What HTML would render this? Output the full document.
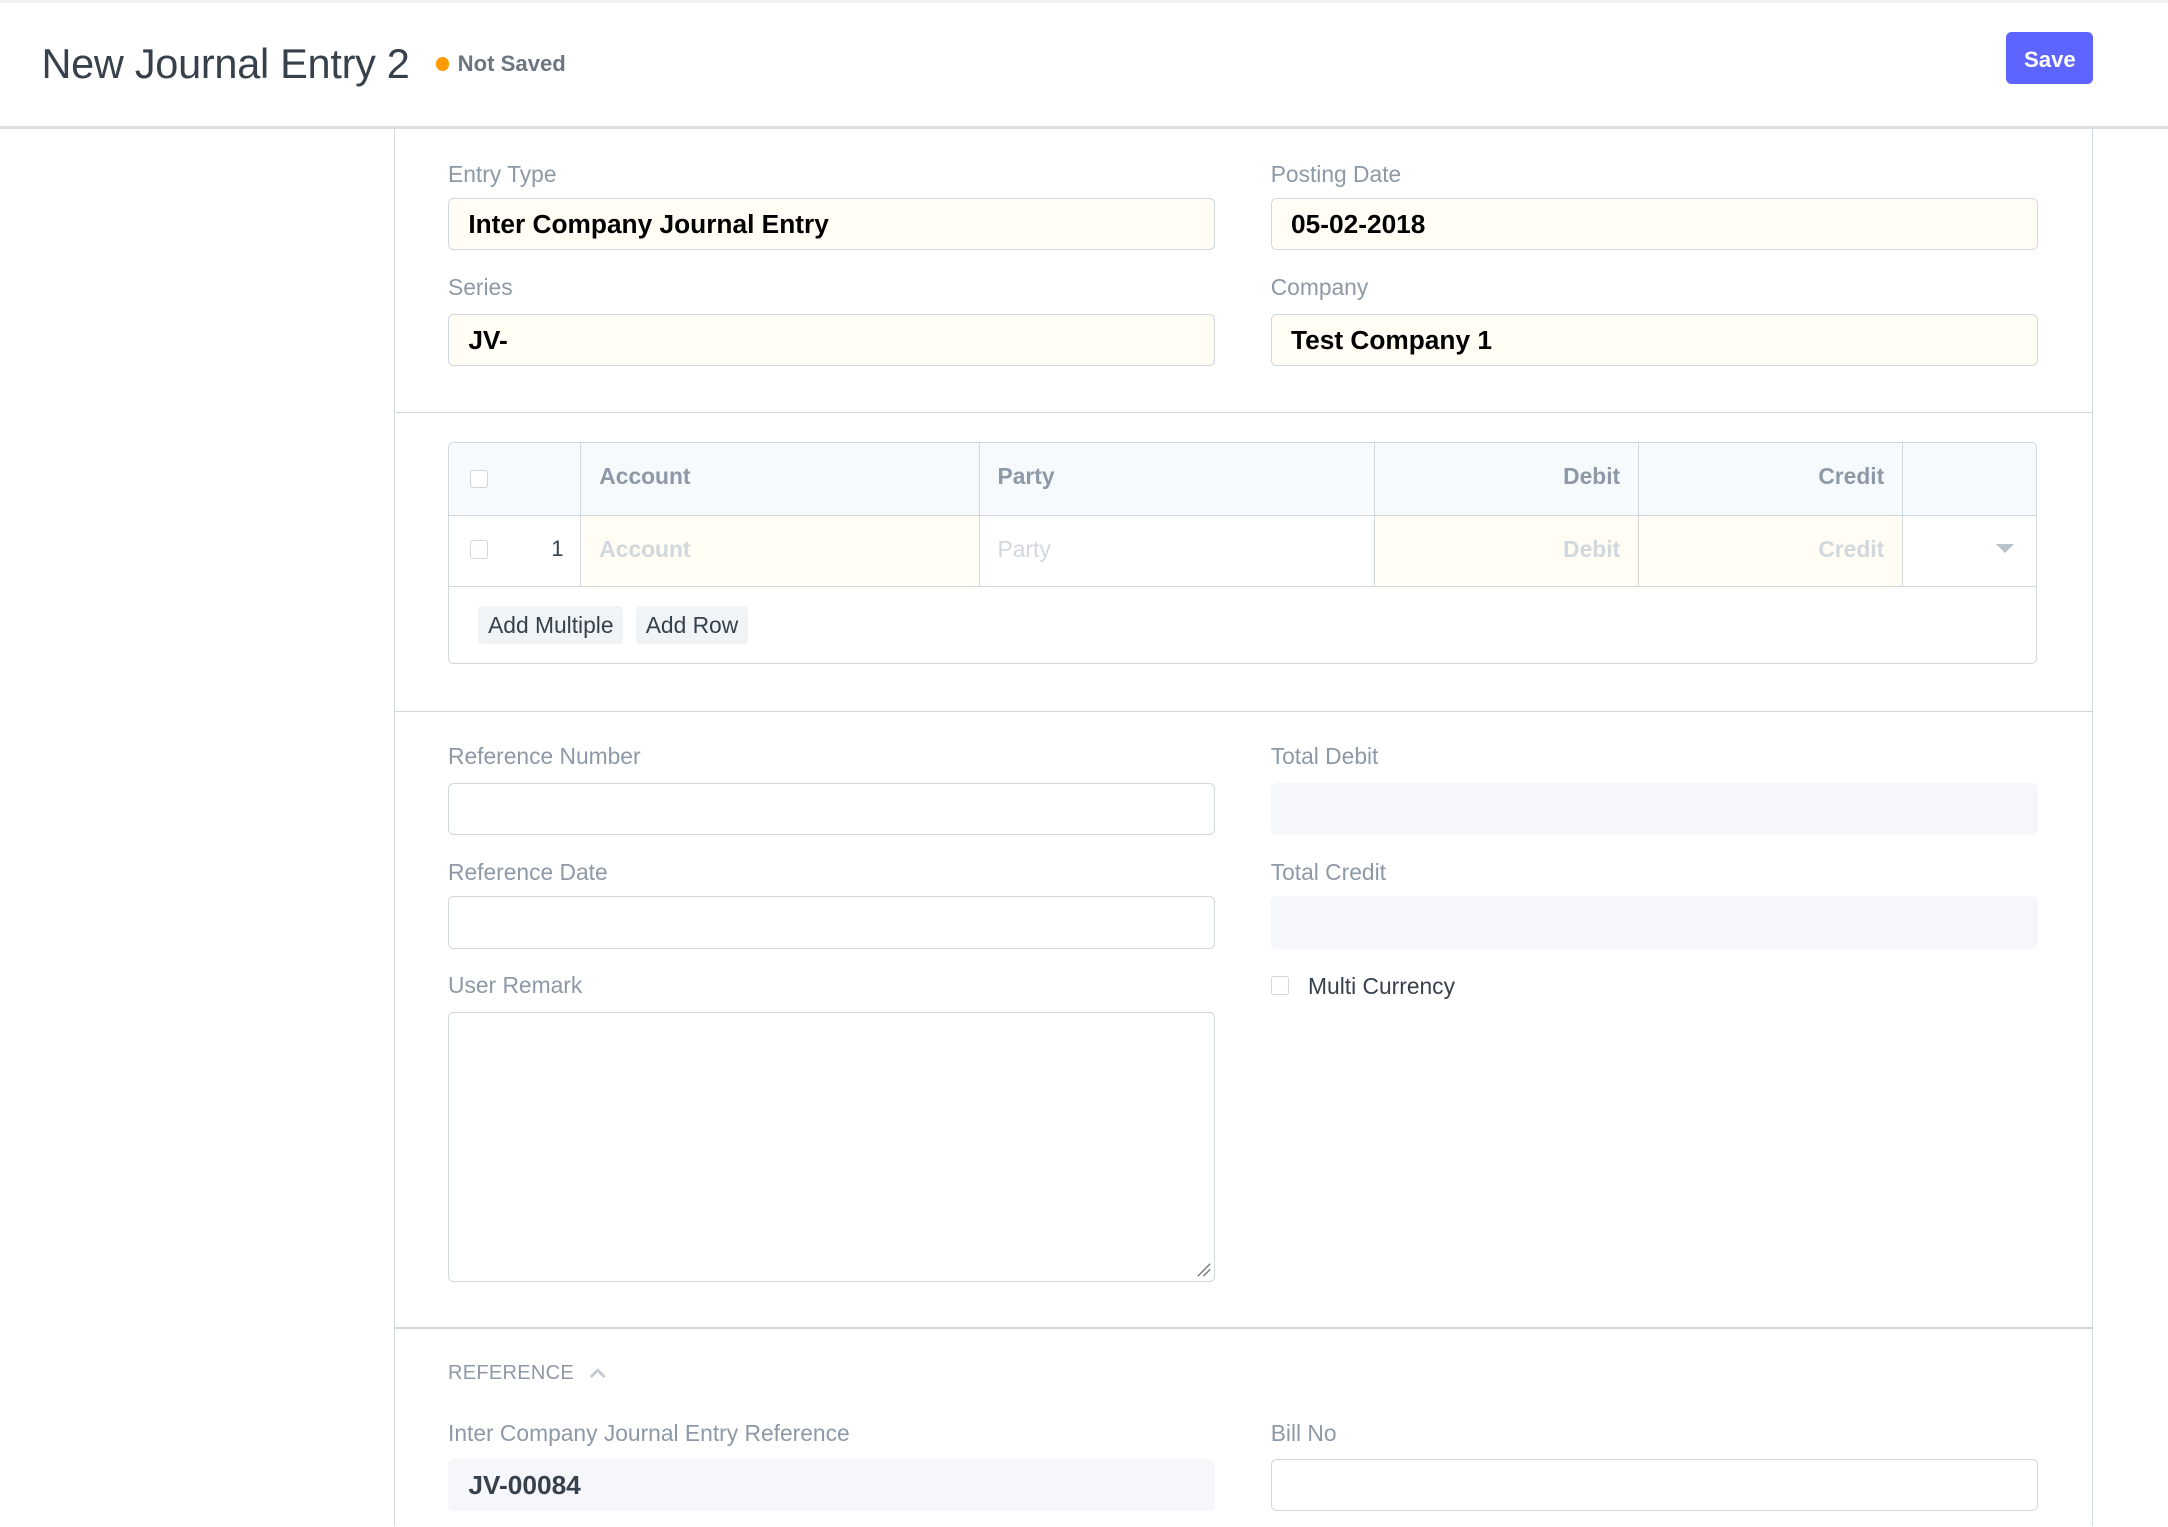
<!DOCTYPE html>
<html><head><meta charset="utf-8">
<style>
html,body{margin:0;padding:0;background:#fff;}
body{width:2168px;height:1526px;overflow:hidden;}
#w{zoom:1.3827;position:relative;width:1568px;height:1104px;font-family:"Liberation Sans",sans-serif;color:#36414c;}
.a{position:absolute;}
.lbl{position:absolute;font-size:16.5px;color:#8d99a6;line-height:18px;}
.inp{position:absolute;box-sizing:border-box;height:38px;width:555px;border:1px solid #d1d8dd;border-radius:4px;background:#fffdf4;font-weight:bold;font-size:19px;color:#000;padding-left:14px;line-height:37px;}
.w{background:#fff;}
.g{background:#f5f7fa;border-color:#f5f7fa;color:#36414c;}
.th{position:absolute;top:0;height:52px;line-height:48px;font-weight:bold;font-size:16.5px;color:#8d99a6;box-sizing:border-box;border-left:1px solid #d1d8dd;padding:0 13px;}
.td{position:absolute;top:52px;height:52px;line-height:48px;font-weight:bold;font-size:16.5px;color:#d1d8dd;box-sizing:border-box;border-left:1px solid #d1d8dd;border-top:1px solid #d1d8dd;padding:0 13px;}
.cb{position:absolute;width:12px;height:12px;border:1px solid #d1d8dd;border-radius:2px;background:#fff;}
.btn{position:absolute;top:438px;height:28px;line-height:28px;background:#f0f4f7;border-radius:3px;font-size:16.5px;color:#36414c;padding:0 7px;}
</style></head><body><div id="w">
<div class="a" style="left:0;top:0;width:1568px;height:2px;background:#eef0f2"></div>
<div class="a" style="left:0;top:91px;width:1568px;height:2px;background:#d8dee3"></div>
<div class="a" style="left:30px;top:29px;font-size:30px;letter-spacing:-0.2px;color:#36414c">New Journal Entry 2</div>
<div class="a" style="left:315px;top:41px;width:10px;height:10px;border-radius:5px;background:#ff9a00"></div>
<div class="a" style="left:331px;top:37px;font-size:16px;font-weight:bold;color:#6c7680">Not Saved</div>
<div class="a" style="left:1451px;top:23px;width:63px;height:38px;border-radius:4px;background:#5e64ff;color:#fff;font-weight:bold;font-size:16px;line-height:40px;text-align:center">Save</div>
<div class="a" style="left:285px;top:93px;width:1px;height:1011px;background:#d1d8dd"></div>
<div class="a" style="left:1513px;top:93px;width:1px;height:1011px;background:#d1d8dd"></div>
<div class="a" style="left:286px;top:298px;width:1227px;height:1px;background:#d1d8dd"></div>
<div class="a" style="left:286px;top:514px;width:1227px;height:1px;background:#d1d8dd"></div>
<div class="a" style="left:286px;top:960px;width:1227px;height:1px;background:#d1d8dd"></div>

<div class="lbl" style="left:324px;top:117px">Entry Type</div>
<div class="lbl" style="left:919px;top:117px">Posting Date</div>
<div class="inp" style="left:324px;top:143px">Inter Company Journal Entry</div>
<div class="inp" style="left:919px;top:143px">05-02-2018</div>
<div class="lbl" style="left:324px;top:199px">Series</div>
<div class="lbl" style="left:919px;top:199px">Company</div>
<div class="inp" style="left:324px;top:227px">JV-</div>
<div class="inp" style="left:919px;top:227px">Test Company 1</div>

<div class="a" style="left:324px;top:320px;width:1149px;height:160px;box-sizing:border-box;border:1px solid #d1d8dd;border-radius:4px;overflow:hidden">
 <div class="a" style="left:0;top:0;width:1149px;height:52px;background:#f7fafc"></div>
 <div class="cb" style="left:15px;top:19px"></div>
 <div class="th" style="left:95px;width:288px">Account</div>
 <div class="th" style="left:383px;width:287px">Party</div>
 <div class="th" style="left:669px;width:191px;text-align:right">Debit</div>
 <div class="th" style="left:860px;width:191px;text-align:right">Credit</div>
 <div class="th" style="left:1051px;width:98px"></div>
 <div class="a" style="left:0;top:52px;width:95px;height:52px;border-top:1px solid #d1d8dd;box-sizing:border-box"></div>
 <div class="cb" style="left:15px;top:70px"></div>
 <div class="a" style="left:74px;top:67px;font-size:16px;color:#36414c">1</div>
 <div class="td" style="left:95px;width:288px;background:#fffdf4">Account</div>
 <div class="td" style="left:383px;width:287px;font-weight:normal">Party</div>
 <div class="td" style="left:669px;width:191px;text-align:right;background:#fffdf4">Debit</div>
 <div class="td" style="left:860px;width:191px;text-align:right;background:#fffdf4">Credit</div>
 <div class="td" style="left:1051px;width:98px"></div>
 <div class="a" style="left:1119px;top:73px;width:0;height:0;border-left:7px solid transparent;border-right:7px solid transparent;border-top:7px solid #b8c2cc"></div>
 <div class="a" style="left:0;top:103px;width:1149px;height:1px;background:#d1d8dd"></div>
</div>
<div class="btn" style="left:346px">Add Multiple</div>
<div class="btn" style="left:460px">Add Row</div>

<div class="lbl" style="left:324px;top:538px">Reference Number</div>
<div class="lbl" style="left:919px;top:538px">Total Debit</div>
<div class="inp w" style="left:324px;top:566px"></div>
<div class="inp g" style="left:919px;top:566px"></div>
<div class="lbl" style="left:324px;top:622px">Reference Date</div>
<div class="lbl" style="left:919px;top:622px">Total Credit</div>
<div class="inp w" style="left:324px;top:648px"></div>
<div class="inp g" style="left:919px;top:648px"></div>
<div class="lbl" style="left:324px;top:704px">User Remark</div>
<div class="inp w" style="left:324px;top:732px;height:195px"></div>
<svg class="a" style="left:864px;top:912px" width="12" height="12"><path d="M2 11L11 2M6 11L11 6" stroke="#777" stroke-width="1"/></svg>
<div class="cb" style="left:919px;top:706px"></div>
<div class="a" style="left:946px;top:704px;font-size:16.5px;color:#36414c">Multi Currency</div>

<div class="a" style="left:324px;top:985px;font-size:14.5px;color:#8d99a6;letter-spacing:0.2px">REFERENCE</div>
<svg class="a" style="left:425px;top:988px" width="14" height="10"><path d="M2 8L7 3L12 8" stroke="#c0c8d0" stroke-width="2" fill="none"/></svg>
<div class="lbl" style="left:324px;top:1028px">Inter Company Journal Entry Reference</div>
<div class="lbl" style="left:919px;top:1028px">Bill No</div>
<div class="inp g" style="left:324px;top:1055px">JV-00084</div>
<div class="inp w" style="left:919px;top:1055px"></div>
</div></body></html>
